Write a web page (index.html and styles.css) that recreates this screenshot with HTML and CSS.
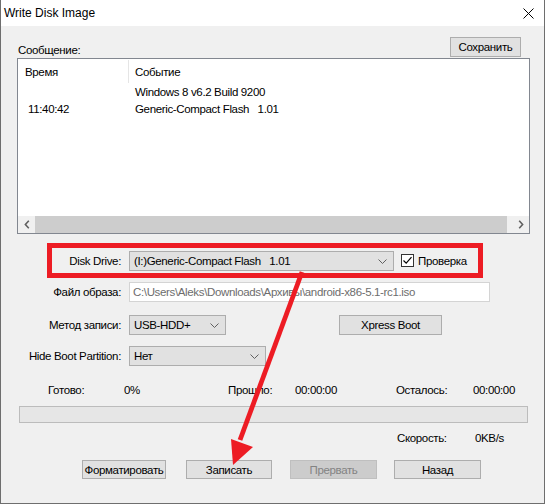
FILE: index.html
```html
<!DOCTYPE html>
<html lang="ru">
<head>
<meta charset="utf-8">
<title>Write Disk Image</title>
<link rel="stylesheet" href="styles.css">
</head>
<body>
<div class="window">
  <div class="titlebar">
    <span class="title">Write Disk Image</span>
    <svg class="close" width="11" height="11" viewBox="0 0 11 11"><path d="M0.5 0.5 L10.5 10.5 M10.5 0.5 L0.5 10.5" stroke="#000" stroke-width="1" fill="none"/></svg>
  </div>
  <div class="content">
    <div class="msg-row">
      <span class="msg-label">Сообщение:</span>
      <div class="btn btn-save">Сохранить</div>
    </div>
    <div class="list">
      <div class="list-body">
        <div class="lv-head">
          <div class="c1">Время</div>
          <div class="sep"></div>
          <div class="c2">Событие</div>
        </div>
        <div class="lv-row"><div class="c1"></div><div class="c2">Windows 8 v6.2 Build 9200</div></div>
        <div class="lv-row"><div class="c1 time">11:40:42</div><div class="c2">Generic-Compact Flash&nbsp;&nbsp; 1.01</div></div>
      </div>
      <div class="hscroll">
        <div class="sarrow left"><svg width="6" height="9" viewBox="0 0 6 9"><path d="M4.8 0.8 L1.4 4.5 L4.8 8.2" stroke="#606060" stroke-width="1.6" fill="none"/></svg></div>
        <div class="track"></div>
        <div class="sarrow right"><svg width="6" height="9" viewBox="0 0 6 9"><path d="M1.2 0.8 L4.6 4.5 L1.2 8.2" stroke="#606060" stroke-width="1.6" fill="none"/></svg></div>
      </div>
    </div>

    <div class="highlight">
      <div class="hl-label">Disk Drive:</div>
      <div class="combo combo-drive"><span class="combo-text">(I:)Generic-Compact Flash&nbsp;&nbsp; 1.01</span><svg class="chev" width="9" height="5" viewBox="0 0 9 5"><path d="M0.5 0.5 L4.5 4.5 L8.5 0.5" stroke="#606060" stroke-width="1" fill="none"/></svg></div>
      <div class="check"><svg width="13" height="13" viewBox="0 0 13 13"><rect x="0.5" y="0.5" width="12" height="12" fill="#fff" stroke="#333"/><path d="M2.5 6.5 L5.2 9.2 L10.5 3.2" stroke="#000" stroke-width="1.2" fill="none"/></svg></div>
      <span class="check-label">Проверка</span>
    </div>

    <div class="form-row row-file">
      <div class="label">Файл образа:</div>
      <div class="textbox">C:\Users\Aleks\Downloads\Архивы\android-x86-5.1-rc1.iso</div>
    </div>

    <div class="form-row row-method">
      <div class="label">Метод записи:</div>
      <div class="combo combo-method"><span class="combo-text">USB-HDD+</span><svg class="chev" width="9" height="5" viewBox="0 0 9 5"><path d="M0.5 0.5 L4.5 4.5 L8.5 0.5" stroke="#606060" stroke-width="1" fill="none"/></svg></div>
      <div class="btn btn-xpress">Xpress Boot</div>
    </div>

    <div class="form-row row-hide">
      <div class="label">Hide Boot Partition:</div>
      <div class="combo combo-hide"><span class="combo-text">Нет</span><svg class="chev" width="9" height="5" viewBox="0 0 9 5"><path d="M0.5 0.5 L4.5 4.5 L8.5 0.5" stroke="#606060" stroke-width="1" fill="none"/></svg></div>
    </div>

    <div class="stats">
      <span class="s-ready">Готово:</span>
      <span class="s-pct">0%</span>
      <span class="s-elapsed">Прошло:</span>
      <span class="s-etime">00:00:00</span>
      <span class="s-left">Осталось:</span>
      <span class="s-ltime">00:00:00</span>
    </div>

    <div class="progress"></div>

    <div class="speed">
      <span class="sp-label">Скорость:</span>
      <span class="sp-val">0KB/s</span>
    </div>

    <div class="actions">
      <div class="btn btn-format">Форматировать</div>
      <div class="btn btn-write">Записать</div>
      <div class="btn btn-abort disabled">Прервать</div>
      <div class="btn btn-back">Назад</div>
    </div>
  </div>

  <svg class="annot" width="545" height="504" viewBox="0 0 545 504">
    <line x1="302" y1="272" x2="240" y2="440" stroke="#ed1c24" stroke-width="4.8"/>
    <polygon points="231,439 253,447 233,465" fill="#ed1c24"/>
  </svg>
</div>
</body>
</html>
```

FILE: styles.css
```css
* { box-sizing: border-box; }

html, body {
  margin: 0;
  padding: 0;
  background: #f0f0f0;
}

.window {
  position: relative;
  width: 545px;
  height: 504px;
  background: #f0f0f0;
  border-left: 1px solid #6e6e6e;
  border-right: 1px solid #6e6e6e;
  border-bottom: 1px solid #6e6e6e;
  font-family: "Liberation Sans", Arial, sans-serif;
  font-size: 11.5px;
  letter-spacing: -0.35px;
  color: #000;
  overflow: hidden;
}

.titlebar {
  height: 26px;
  background: #fff;
  display: flex;
  align-items: center;
}

.title {
  font-size: 12px;
  letter-spacing: 0;
  padding-left: 3px;
  line-height: 26px;
}

.close {
  margin-left: auto;
  margin-right: 10px;
  margin-top: 1px;
}

.content {
  padding-left: 16px;
}

/* message row */
.msg-row {
  margin-top: 11px;
  width: 513px;
  height: 20px;
  display: flex;
  align-items: flex-end;
  justify-content: space-between;
}

.msg-label {
  line-height: 13px;
  padding-left: 1px;
}

.btn {
  height: 20px;
  border: 1px solid #adadad;
  background: #e1e1e1;
  display: flex;
  align-items: center;
  justify-content: center;
  white-space: nowrap;
}

.btn-save {
  width: 71px;
  margin-right: 9px;
}

/* list view */
.list {
  margin-top: 1px;
  width: 513px;
  height: 176px;
  border: 1px solid #828790;
  background: #fff;
  display: flex;
  flex-direction: column;
}

.list-body {
  flex: 1;
}

.lv-head {
  height: 25px;
  display: flex;
  align-items: center;
}

.lv-head .c1 {
  width: 110px;
  padding-left: 7px;
}

.sep {
  width: 1px;
  height: 23px;
  background: #e5e5e5;
  align-self: flex-start;
  margin-top: 1px;
}

.lv-head .c2 {
  padding-left: 6px;
}

.lv-row {
  height: 17px;
  line-height: 17px;
  display: flex;
}

.lv-row .c1 {
  width: 111px;
  padding-left: 10px;
}

.lv-row .c2 {
  padding-left: 6px;
  white-space: nowrap;
}

.hscroll {
  height: 17px;
  display: flex;
  background: #f0f0f0;
}

.sarrow {
  display: flex;
  align-items: center;
}

.sarrow.left {
  width: 17px;
  justify-content: center;
}

.sarrow.right {
  width: 22px;
  padding-left: 11px;
}

.track {
  flex: 1;
  background: #cdcdcd;
}

/* highlighted drive row */
.highlight {
  margin-top: 9px;
  margin-left: 30px;
  width: 436px;
  height: 35px;
  border: 5px solid #ed1c24;
  display: flex;
  align-items: flex-start;
  padding-top: 3px;
}

.hl-label {
  width: 69px;
  text-align: right;
  line-height: 20px;
}

.combo {
  height: 20px;
  border: 1px solid #adadad;
  background: #e1e1e1;
  display: flex;
  align-items: center;
  padding-left: 4px;
  padding-right: 6px;
  white-space: nowrap;
}

.combo-text {
  flex: 1;
}

.chev {
  flex: none;
}

.combo-drive {
  margin-left: 8px;
  width: 265px;
}

.check {
  margin-left: 7px;
  margin-top: 3px;
  width: 13px;
  height: 13px;
  display: flex;
}

.check-label {
  margin-left: 4px;
  line-height: 20px;
}

/* form rows */
.form-row {
  display: flex;
  align-items: center;
  height: 20px;
}

.label {
  width: 105px;
  text-align: right;
  padding-right: 1px;
  white-space: nowrap;
}

.row-file { margin-top: 4px; }
.row-method { margin-top: 13px; }
.row-hide { margin-top: 11px; }

.textbox {
  margin-left: 7px;
  width: 361px;
  height: 20px;
  border: 1px solid #d4d4d4;
  background: #fff;
  color: #6d6d6d;
  padding-left: 3px;
  line-height: 18px;
  white-space: nowrap;
  overflow: hidden;
}

.combo-method {
  margin-left: 7px;
  width: 97px;
}

.combo-hide {
  margin-left: 7px;
  width: 137px;
}

.btn-xpress {
  margin-left: 113px;
  width: 103px;
}

/* stats */
.stats {
  margin-top: 17px;
  height: 14px;
  line-height: 14px;
  display: flex;
  padding-left: 31px;
}

.s-ready { width: 76px; }
.s-pct { width: 104px; }
.s-elapsed { width: 67px; }
.s-etime { width: 101px; }
.s-left { width: 77px; }

.progress {
  margin-top: 9px;
  margin-left: 2px;
  width: 509px;
  height: 17px;
  background: #e6e6e6;
  border: 1px solid #bcbcbc;
}

.speed {
  margin-top: 8px;
  height: 14px;
  line-height: 14px;
  display: flex;
  padding-left: 380px;
}

.sp-label { width: 78px; }

/* bottom buttons */
.actions {
  margin-top: 15px;
  display: flex;
  padding-left: 65px;
}

.actions .btn {
  height: 19px;
}

.btn-format { width: 84px; }
.btn-write { width: 86px; margin-left: 20px; }
.btn-abort { width: 87px; margin-left: 18px; }
.btn-back { width: 87px; margin-left: 17px; }

.btn.disabled {
  background: #cccccc;
  border-color: #bfbfbf;
  color: #838383;
}

/* annotation overlay */
.annot {
  position: absolute;
  left: -1px;
  top: 0;
  pointer-events: none;
}
```
